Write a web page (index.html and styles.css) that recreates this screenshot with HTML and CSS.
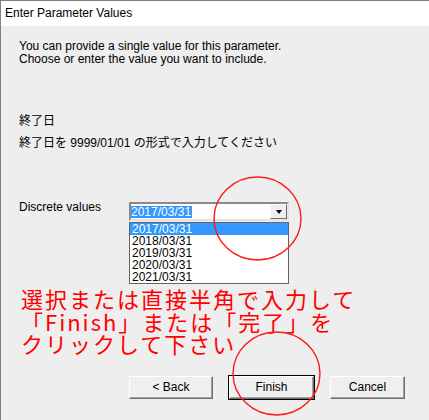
FILE: index.html
```html
<!DOCTYPE html>
<html lang="ja">
<head>
<meta charset="utf-8">
<title>Enter Parameter Values</title>
<link rel="stylesheet" href="styles.css">
</head>
<body>
<div class="window">
  <div class="titlebar">Enter Parameter Values</div>
  <div class="content">
    <div class="intro">
      <p>You can provide a single value for this parameter.</p>
      <p>Choose or enter the value you want to include.</p>
    </div>
    <p class="param-name">終了日</p>
    <p class="param-desc">終了日を 9999/01/01 の形式で入力してください</p>
    <div class="value-row">
      <div class="value-label">Discrete values</div>
      <div class="combo-col">
        <div class="combo">
          <div class="combo-text"><span class="sel">2017/03/31</span></div>
          <div class="combo-btn"><span class="arrow"></span></div>
        </div>
        <ul class="dropdown">
          <li class="active">2017/03/31</li>
          <li>2018/03/31</li>
          <li>2019/03/31</li>
          <li>2020/03/31</li>
          <li>2021/03/31</li>
        </ul>
      </div>
    </div>
    <div class="note">選択または直接半角で入力して<br>「Finish」または「完了」を<br>クリックして下さい</div>
    <div class="buttons">
      <button class="btn btn-back">&lt; Back</button>
      <button class="btn btn-finish">Finish</button>
      <button class="btn btn-cancel">Cancel</button>
    </div>
  </div>
  <svg class="marks" width="429" height="420" viewBox="0 0 429 420">
    <ellipse cx="257.5" cy="218.5" rx="43.5" ry="41.5" fill="none" stroke="#ff1a1a" stroke-width="1.4"/>
    <ellipse cx="276.5" cy="373.5" rx="43.5" ry="41.5" fill="none" stroke="#ff1a1a" stroke-width="1.4"/>
  </svg>
</div>
</body>
</html>
```
FILE: styles.css
```css
html, body {
  margin: 0;
  padding: 0;
}
body {
  width: 429px;
  height: 420px;
  overflow: hidden;
  background: #eeeeee;
  font-family: "Liberation Sans", "Noto Sans CJK JP", sans-serif;
  font-size: 12px;
  color: #000;
}
.window {
  position: relative;
  height: 420px;
  box-sizing: border-box;
  border-top: 1px solid #808080;
  border-left: 1px solid #808080;
}
.titlebar {
  height: 25px;
  line-height: 25px;
  background: #ffffff;
  padding-left: 4px;
  font-size: 12px;
}
.content {
  padding: 14px 0 0 18px;
}
.intro p {
  margin: 0;
  line-height: 13px;
}
.param-name {
  margin: 47px 0 0;
  line-height: 14px;
  font-family: "Noto Sans CJK JP", sans-serif;
}
.param-desc {
  margin: 9px 0 0;
  line-height: 14px;
  font-family: "Liberation Sans", "Noto Sans CJK JP", sans-serif;
}
.value-row {
  display: flex;
  margin-top: 51px;
  height: 83px;
}
.value-label {
  width: 110px;
  line-height: 13px;
}
.combo-col {
  display: flex;
  flex-direction: column;
  width: 160px;
}
.combo {
  margin-top: 1px;
  height: 19px;
  box-sizing: border-box;
  display: flex;
  background: #fff;
  border: 2px solid;
  border-color: #8a8a8a #e3e3e3 #e3e3e3 #8a8a8a;
}
.combo-text {
  flex: 1;
  padding-top: 1px;
}
.sel {
  display: inline-block;
  line-height: 12px;
  background: #3399ff;
  color: #fff;
  padding: 0 1px 0 0;
}
.combo-btn {
  width: 17px;
  height: 15px;
  box-sizing: border-box;
  background: #eeeeee;
  border: 1px solid;
  border-color: #ffffff #6e6e6e #6e6e6e #ffffff;
  display: flex;
  align-items: center;
  justify-content: center;
}
.arrow {
  width: 0;
  height: 0;
  border-left: 3.5px solid transparent;
  border-right: 3.5px solid transparent;
  border-top: 4px solid #000;
}
.dropdown {
  list-style: none;
  margin: 1px 0 0;
  padding: 0;
  border: 1px solid #646464;
  background: #fff;
}
.dropdown li {
  height: 12px;
  line-height: 12px;
  padding-left: 2px;
}
.dropdown li.active {
  background: #3399ff;
  color: #fff;
}
.note {
  margin-top: 3px;
  padding-left: 2px;
  font-family: "Noto Sans CJK JP", sans-serif;
  font-size: 22px;
  letter-spacing: 2px;
  line-height: 22.5px;
  color: #ff0000;
}
.buttons {
  display: flex;
  gap: 16px;
  margin-top: 21px;
  padding-left: 110px;
}
.btn {
  height: 23px;
  box-sizing: border-box;
  margin: 0;
  padding: 0;
  font-family: "Liberation Sans", sans-serif;
  font-size: 12px;
  color: #000;
  background: #efefef;
  border: 1px solid;
  border-color: #ffffff #6e6e6e #6e6e6e #ffffff;
  box-shadow: inset -1px -1px 0 #a0a0a0;
}
.btn-back { width: 84px; }
.btn-finish {
  width: 85px;
  outline: 1px solid #000;
  outline-offset: 0;
}
.btn-cancel { width: 75px; }
.marks {
  position: absolute;
  left: -1px;
  top: -1px;
  pointer-events: none;
}
```
